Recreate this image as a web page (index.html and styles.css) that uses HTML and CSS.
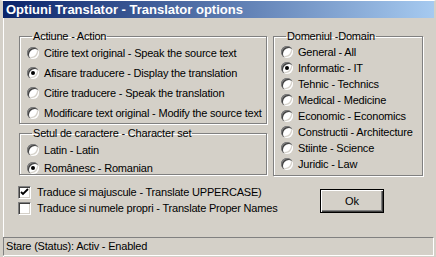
FILE: index.html
```html
<!DOCTYPE html>
<html lang="ro">
<head>
	<meta charset="UTF-8">
	<title>Optiuni Translator</title>
	<link rel="stylesheet" href="styles.css">
</head>
<body>
	<div class="window">
		<div class="titlebar">Optiuni Translator - Translator options</div>
		<div class="content">
			<div class="groups">
				<div class="leftcol">
					<fieldset class="group action">
						<legend>Actiune - Action</legend>
						<label class="opt"><span class="radio"></span>Citire text original - Speak the source text</label>
						<label class="opt"><span class="radio on"></span>Afisare traducere - Display the translation</label>
						<label class="opt"><span class="radio"></span>Citire traducere - Speak the translation</label>
						<label class="opt"><span class="radio"></span>Modificare text original - Modify the source text</label>
					</fieldset>
					<fieldset class="group charset">
						<legend>Setul de caractere - Character set</legend>
						<label class="opt"><span class="radio"></span>Latin - Latin</label>
						<label class="opt"><span class="radio on"></span>Românesc - Romanian</label>
					</fieldset>
				</div>
				<fieldset class="group domain">
					<legend>Domeniul -Domain</legend>
					<label class="opt"><span class="radio"></span>General - All</label>
					<label class="opt"><span class="radio on"></span>Informatic - IT</label>
					<label class="opt"><span class="radio"></span>Tehnic - Technics</label>
					<label class="opt"><span class="radio"></span>Medical - Medicine</label>
					<label class="opt"><span class="radio"></span>Economic - Economics</label>
					<label class="opt"><span class="radio"></span>Constructii - Architecture</label>
					<label class="opt"><span class="radio"></span>Stiinte - Science</label>
					<label class="opt"><span class="radio"></span>Juridic - Law</label>
				</fieldset>
			</div>
			<div class="bottom">
				<div class="checks">
					<label class="chk"><span class="box"><svg width="9" height="9" viewBox="0 0 9 9"><path d="M1 4 L3 6 L8 1" fill="none" stroke="#000" stroke-width="1.8"/></svg></span>Traduce si majuscule - Translate UPPERCASE)</label>
					<label class="chk"><span class="box"></span>Traduce si numele propri - Translate Proper Names</label>
				</div>
				<button class="btn">Ok</button>
			</div>
		</div>
		<div class="status">Stare (Status): Activ - Enabled</div>
	</div>
</body>
</html>
```

FILE: styles.css
```css
*{
	margin: 0;
	padding: 0;
	box-sizing: border-box;
}
body{
	width: 436px;
	height: 257px;
	background: #d4d0c8;
	font-family: Tahoma, "Liberation Sans", Arial, sans-serif;
	font-size: 11px;
	letter-spacing: -0.2px;
	color: #000;
}
.window{
	display: flex;
	flex-direction: column;
	height: 257px;
	border-top: 1px solid #fff;
	border-left: 3px solid #d4d0c8;
	border-right: 2px solid #d4d0c8;
	box-shadow: inset 1px 0 0 #fff;
}
.titlebar{
	height: 17px;
	line-height: 17px;
	padding-left: 3px;
	color: #fff;
	font-weight: bold;
	font-size: 13px;
	letter-spacing: 0;
	background: linear-gradient(to right, #0a246a, #a6caf0);
	white-space: nowrap;
}
.content{
	flex: 1;
	padding: 12px 0 0 16px;
}
.groups{
	display: flex;
	gap: 6px;
}
.leftcol{
	display: flex;
	flex-direction: column;
	gap: 3px;
	flex: none;
	width: 248px;
	min-width: 0;
}
.group{
	min-width: 0;
	border: 1px solid #808080;
	box-shadow: inset 1px 1px 0 #fff, 1px 1px 0 #fff;
	padding: 0 0 0 7px;
}
.group legend{
	margin-left: 5px;
	padding: 0 1px;
	line-height: 13px;
}
.action{
	height: 94px;
	padding-top: 0;
}
.charset{
	height: 48px;
	padding-top: 1px;
}
.domain{
	flex: none;
	width: 150px;
	height: 146px;
	padding-top: 1px;
}
.opt{
	display: flex;
	align-items: center;
	gap: 5px;
	height: 20px;
	white-space: nowrap;
}
.charset .opt{
	height: 18px;
}
.domain .opt{
	height: 16px;
}
.radio{
	position: relative;
	flex: none;
	width: 12px;
	height: 12px;
	border-radius: 50%;
	background: #fff;
	box-shadow: inset 1px 1px 0 #808080, inset 2px 2px 0 #404040, inset -1px -1px 0 #fff, inset -2px -2px 0 #d4d0c8;
}
.radio.on::after{
	content: "";
	position: absolute;
	left: 4px;
	top: 4px;
	width: 4px;
	height: 4px;
	border-radius: 50%;
	background: #000;
}
.bottom{
	display: flex;
	align-items: flex-start;
	margin-top: 8px;
}
.checks{
	display: flex;
	flex-direction: column;
	width: 302px;
	margin-left: -1px;
}
.chk{
	display: flex;
	align-items: center;
	gap: 6px;
	height: 16px;
	white-space: nowrap;
}
.box{
	display: flex;
	align-items: center;
	justify-content: center;
	flex: none;
	width: 13px;
	height: 13px;
	background: #fff;
	border-top: 1px solid #808080;
	border-left: 1px solid #808080;
	border-right: 1px solid #fff;
	border-bottom: 1px solid #fff;
	box-shadow: inset 1px 1px 0 #404040, inset -1px -1px 0 #d4d0c8;
}
.btn{
	width: 64px;
	height: 24px;
	margin-top: 5px;
	background: #d4d0c8;
	border: 1px solid #000;
	box-shadow: inset 1px 1px 0 #fff, inset -1px -1px 0 #404040, inset -2px -2px 0 #808080;
	font-family: inherit;
	font-size: 11px;
	color: #000;
}
.status{
	height: 19px;
	line-height: 17px;
	padding-left: 2px;
	border-top: 1px solid #808080;
	border-left: 1px solid #808080;
	border-right: 1px solid #fff;
	border-bottom: 1px solid #fff;
	margin-bottom: 1px;
	white-space: nowrap;
}
```
